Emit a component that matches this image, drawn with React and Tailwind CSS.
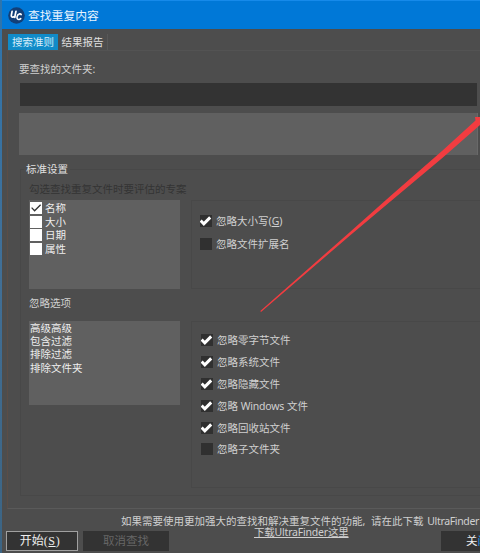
import { useState } from 'react';
import clsx from 'clsx';

const criteria = ['名称', '大小', '日期', '属性'];
const filters = ['高级高级', '包含过滤', '排除过滤', '排除文件夹'];
const ignoreOptions = [
  { label: '忽略零字节文件', checked: true },
  { label: '忽略系统文件', checked: true },
  { label: '忽略隐藏文件', checked: true },
  { label: <>忽略 <span className="tracking-[-0.2px]">Windows</span> 文件</>, checked: true },
  { label: '忽略回收站文件', checked: true },
  { label: '忽略子文件夹', checked: false },
];

function Logo() {
  return (
    <svg className="size-[17px] shrink-0" viewBox="0 0 17 17">
      <circle cx="8.5" cy="8.5" r="8.3" fill="#123f78" />
      <g fill="none" stroke="#fff" strokeLinecap="round" strokeLinejoin="round">
        <path d="M4.1 4.3 3.3 8.3Q3.2 10.3 5 10.1Q6.6 9.8 7.1 8.2L8 4.3M7.2 8L6.8 10.3" strokeWidth="1.7" />
        <path d="M13.2 7.6Q12.8 6.7 11.6 6.9Q9.4 7.3 9 9.8Q8.8 12.6 11 12.5Q12 12.4 12.7 11.6" strokeWidth="1.6" />
      </g>
    </svg>
  );
}

function CheckBox({ checked, children }) {
  return (
    <div className="flex h-3 items-center gap-1">
      <svg className="size-3 shrink-0 bg-[#303030]" viewBox="0 0 12 12">
        {checked && <path d="M0.6 5.6 3.8 8.8 10.2 2.4" fill="none" stroke="#fff" strokeWidth="3" />}
      </svg>
      <span>{children}</span>
    </div>
  );
}

function ListCheck({ checked, label }) {
  return (
    <div className="flex h-[13.8px] items-center gap-[3px]">
      <svg className="size-3 shrink-0 bg-white" viewBox="0 0 12 12">
        {checked && <path d="M1.6 5.6 4.6 8.7 10.6 2.7" fill="none" stroke="#333" strokeWidth="1.3" />}
      </svg>
      <span className="text-[#eee]">{label}</span>
    </div>
  );
}

function App() {
  const [tab, setTab] = useState('criteria');

  return (
    <div className="relative flex h-[553px] w-[480px] overflow-hidden bg-[#4d4d4d] font-['Noto_Sans','Noto_Sans_CJK_SC',sans-serif] text-[10.5px] leading-3 whitespace-nowrap text-[#d0d0d0]">
      {/* desktop showing at the window edge */}
      <div className="w-0.5 shrink-0 bg-linear-to-b from-[#2d75ae] via-[#416f96] to-[#3c6483]" />

      <div className="flex min-w-0 flex-1 flex-col">
        <header className="flex h-[29px] shrink-0 items-center gap-[3px] border-t border-[#168aea] bg-[#0078d7] pl-1.5">
          <Logo />
          <h1 className="text-[11.8px] text-[#e8f4ff]">查找重复内容</h1>
        </header>

        <nav className="mt-[5px] flex h-4 shrink-0 pl-1.5">
          <button
            className={clsx('w-[50px] text-center', tab === 'criteria' && 'bg-[#118bc8] text-[#d8eefa]')}
            onClick={() => setTab('criteria')}
          >
            搜索准则
          </button>
          <button className="w-[50px] border-r border-[#585858] text-center text-[#e0e0e0]" onClick={() => setTab('report')}>
            结果报告
          </button>
        </nav>

        {/* tab page */}
        <main className="ml-[5px] flex h-[459px] shrink-0 flex-col border-t border-b border-l border-t-[#535353] border-b-[#5a5a5a] border-l-[#5b4d46] pl-[11px]">
          <p className="mt-3">要查找的文件夹:</p>
          <div className="mt-2 mr-[3px] ml-px h-[23px] shrink-0 bg-[#333]" />
          <div className="mt-[7px] mr-0.5 h-[42px] shrink-0 border-r border-[#696969] bg-[#606060]" />

          <fieldset className="mt-[8px] ml-px h-[333px] shrink-0 border border-r-0 border-[#484848] pl-2">
            <legend className="-ml-[5px] px-0.5 text-[#e0e0e0]">标准设置</legend>
            <p className="mt-[8px] text-[#343434]">勾选查找重复文件时要评估的专案</p>

            <div className="mt-[5px] flex h-[89px] gap-[11px]">
              <div className="w-[151px] shrink-0 bg-[#606060] pt-px pl-px">
                {criteria.map((label, i) => (
                  <ListCheck key={label} label={label} checked={i === 0} />
                ))}
              </div>
              <div className="flex flex-1 flex-col gap-[11px] border border-r-0 border-[#484848] pt-3.5 pl-2">
                <CheckBox checked>忽略大小写(<u>G</u>)</CheckBox>
                <CheckBox>忽略文件扩展名</CheckBox>
              </div>
            </div>

            <p className="mt-[8px]">忽略选项</p>
            <div className="mt-[12px] flex h-[167px] items-start gap-[11px]">
              <ul className="h-[84px] w-[151px] shrink-0 bg-[#606060] pt-px pl-px leading-[13.2px] text-[#eee]">
                {filters.map((name) => (
                  <li key={name}>{name}</li>
                ))}
              </ul>
              <div className="flex h-full flex-1 flex-col gap-[9.9px] border border-r-0 border-[#484848] pt-3 pl-[9px]">
                {ignoreOptions.map((o, i) => (
                  <CheckBox key={i} checked={o.checked}>{o.label}</CheckBox>
                ))}
              </div>
            </div>
          </fieldset>
        </main>

        <footer className="flex flex-1 flex-col pl-1">
          <p className="mt-[7px] ml-[115px] h-[11px] shrink-0 leading-[11px]">
            如果需要使用更加强大的查找和解决重复文件的功能<span className="mr-[3px]">, </span>
            请在此下载 <span className="ml-px tracking-[-0.35px]">UltraFinder</span>
          </p>
          <div className="flex items-start">
            <button className="mt-[4px] h-5 w-[72px] border border-[#a0a0a0] bg-[#333] pr-1 text-[12px] text-[#eee]">
              开始<span className="[font-family:'Liberation_Serif',serif] tracking-[0.6px]">(<u>S</u>)</span>
            </button>
            <button className="mt-[4px] ml-[5px] h-5 w-[86px] bg-[#333] text-[11.5px] text-[#666]" disabled>
              取消查找
            </button>
            <a className="ml-[85px] leading-[11px] tracking-[-0.2px] underline" href="#download">下载UltraFinder这里</a>
            <button className="mt-[4px] ml-auto h-5 w-[39px] shrink-0 overflow-hidden bg-[#333] pl-[25px] text-left text-[11.5px] text-[#eee]">
              关<span className="text-[#2196e8]">闭</span>
            </button>
          </div>
        </footer>
      </div>

      {/* pointer arrow drawn over the dialog */}
      <svg className="pointer-events-none absolute inset-0" width="480" height="553">
        <path d="M260.3 311 350 232 391 195.500 442 151 475.500 120.500 475 117H480V125L442 158.200 391 201 350 235.500 261 312Z" fill="#f23c40" />
      </svg>
    </div>
  );
}

export default App;
